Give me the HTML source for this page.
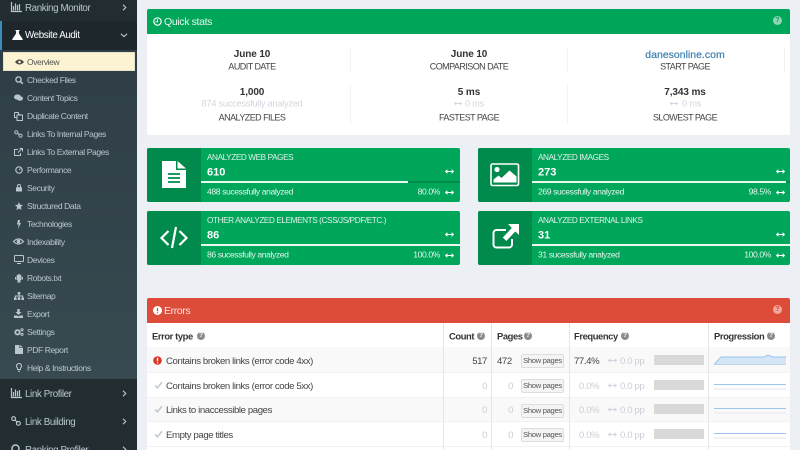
<!DOCTYPE html>
<html><head><meta charset="utf-8">
<style>
html,body{margin:0;padding:0;width:800px;height:450px;overflow:hidden}
body{background:#ecf0f5;font-family:"Liberation Sans",sans-serif;color:#333}
#p{position:relative;width:800px;height:450px;overflow:hidden;background:#ecf0f5}
.a{position:absolute}
.t{position:absolute;white-space:nowrap;line-height:1;transform:translateY(-50%)}
.c{position:absolute;white-space:nowrap;line-height:1;transform:translate(-50%,-50%);text-align:center}
.r{position:absolute;white-space:nowrap;line-height:1;transform:translate(-100%,-50%)}
.s{font-size:8.5px;letter-spacing:-.4px;color:#b8c7ce;left:27px}
.m{font-size:9.8px;letter-spacing:-.4px;color:#b8c7ce;left:25px;margin-top:2px}
.big{font-size:10px;font-weight:bold;letter-spacing:-.1px;color:#333;margin-top:2px}
.up{font-size:9px;letter-spacing:-.55px;color:#444;margin-top:1px}
.lt{font-size:9.3px;letter-spacing:-.28px;color:#d2d6de;margin-top:1px}
.w1{font-size:8.2px;letter-spacing:-.4px;color:#dff3ea;left:60px;margin-top:1px}
.w2{font-size:11px;font-weight:bold;color:#fff;left:60px;margin-top:2px}
.w3{font-size:8.6px;letter-spacing:-.4px;color:#e4f6ed;left:60px}
.box{position:absolute;height:54px;background:#00a65a;border-radius:2px;overflow:hidden}
.ic{position:absolute;left:0;top:0;width:54px;height:54px;background:#008a4b}
.th{font-size:9.4px;font-weight:bold;letter-spacing:-.4px;color:#333}
.td{font-size:9.6px;letter-spacing:-.4px;color:#444;margin-top:1.5px}
.g{color:#c9ced6}
.btn{position:absolute;left:521px;width:41px;height:12px;border:1px solid #ddd;background:#f4f4f4;border-radius:2px;font-size:7.6px;letter-spacing:-.3px;line-height:12px;text-align:center;color:#555}
.bar{position:absolute;left:654px;width:50px;height:10px;background:#d9d9d9}
.vl{position:absolute;width:1px;top:323px;height:127px;background:#e6e6e6}
svg{position:absolute;overflow:visible}
.q{position:absolute;width:8px;height:8px;border-radius:50%;background:#8a8a8a;color:#fff;font-size:7px;font-weight:bold;line-height:8px;text-align:center}
</style></head>
<body><div id="p">
<svg width="0" height="0" style="position:absolute"><defs>
<symbol id="ar" viewBox="0 0 9 5"><path d="M.5 2.500h8M2.500.700L.6 2.500l1.900 1.800M6.500.700l1.900 1.800-1.900 1.800" fill="none" stroke="currentColor" stroke-width="1"/></symbol>
<symbol id="ck" viewBox="0 0 9 8"><path d="M1 4.500l2.500 2.300L8 1.200" fill="none" stroke="currentColor" stroke-width="1.700"/></symbol>
</defs></svg>

<!-- SIDEBAR -->
<div class="a" style="left:0;top:0;width:137px;height:450px;background:#222d32"></div>
<div class="a" style="left:0;top:21px;width:137px;height:29px;background:#1e282c"></div>
<div class="a" style="left:0;top:21px;width:2px;height:29px;background:#3c8dbc"></div>
<div class="a" style="left:0;top:50px;width:137px;height:329px;background:linear-gradient(#2f3e46,#384950)"></div>
<div class="a" style="left:3px;top:52px;width:130px;height:17px;background:#fcf3d3;border:1px solid #e8e2c8"></div>

<svg style="left:11px;top:2px" width="11" height="10" viewBox="0 0 11 10"><path d="M.5 0v9.500H11M2.500 4v4.500M4.500 1.500v7M6.500 3v5.500M8.500 2v6.500" fill="none" stroke="#b8c7ce" stroke-width="1.200"/></svg>
<div class="t m" style="top:7px">Ranking Monitor</div>
<svg style="left:122px;top:4px" width="5" height="7"><path d="M1 .8l2.800 2.700L1 6.200" fill="none" stroke="#b8c7ce" stroke-width="1.100"/></svg>

<svg style="left:12px;top:30px" width="11" height="10" viewBox="0 0 11 10"><path d="M3.500 0h4v1h-.6v2.500L10.800 9.200Q11 10 10 10H1Q0 10 .2 9.200L4.100 3.500V1h-.6z" fill="#fff"/></svg>
<div class="t m" style="top:35px;color:#fff;margin-top:1px">Website Audit</div>
<svg style="left:120px;top:33px" width="8" height="5"><path d="M1 .8l3 2.800 3-2.800" fill="none" stroke="#b8c7ce" stroke-width="1.100"/></svg>

<svg style="left:15px;top:59px" width="9" height="6" viewBox="0 0 9 6"><path d="M0 3Q4.500-2 9 3 4.500 8 0 3z" fill="#444"/><circle cx="4.500" cy="3" r="1.300" fill="#fcf3d3"/></svg>
<div class="t s" style="top:62px;color:#555">Overview</div>

<svg style="left:15px;top:76px" width="8" height="8" viewBox="0 0 8 8"><circle cx="3.500" cy="3.500" r="2.600" fill="none" stroke="#b8c7ce" stroke-width="1.400"/><path d="M5.300 5.300L7.800 7.800" stroke="#b8c7ce" stroke-width="1.500"/></svg>
<div class="t s" style="top:80px">Checked Files</div>
<svg style="left:14px;top:94px" width="9" height="8" viewBox="0 0 9 8"><ellipse cx="3.500" cy="3" rx="3.500" ry="2.600" fill="#b8c7ce"/><ellipse cx="6" cy="4.500" rx="3" ry="2.300" fill="#b8c7ce"/></svg>
<div class="t s" style="top:98px">Content Topics</div>
<svg style="left:14px;top:112px" width="9" height="9" viewBox="0 0 9 9"><path d="M.5.500h4v2h2M2.500 5.500H.5v-5M3 3h5.500v5.500H3z" fill="none" stroke="#b8c7ce"/></svg>
<div class="t s" style="top:116px">Duplicate Content</div>
<svg style="left:14px;top:130px" width="9" height="8" viewBox="0 0 9 8"><circle cx="2.300" cy="2.300" r="1.600" fill="none" stroke="#b8c7ce"/><circle cx="6.500" cy="5.700" r="1.600" fill="none" stroke="#b8c7ce"/><path d="M3.500 3.300l2 1.400" stroke="#b8c7ce"/></svg>
<div class="t s" style="top:134px">Links To Internal Pages</div>
<svg style="left:14px;top:148px" width="9" height="8" viewBox="0 0 9 8"><path d="M6.500 5v2.500H.5v-6H4M4 4.500L8 .800M5.500.500h3v3" fill="none" stroke="#b8c7ce"/></svg>
<div class="t s" style="top:152px">Links To External Pages</div>
<svg style="left:15px;top:166px" width="8" height="8" viewBox="0 0 8 8"><circle cx="4" cy="4" r="3.200" fill="none" stroke="#b8c7ce" stroke-width="1.200"/><path d="M4 4l1.500-1.500" stroke="#b8c7ce"/></svg>
<div class="t s" style="top:170px">Performance</div>
<svg style="left:16px;top:184px" width="6" height="8" viewBox="0 0 6 8"><path d="M1.500 3.500V2a1.500 1.500 0 013 0v1.500" fill="none" stroke="#b8c7ce"/><rect y="3.200" width="6" height="4.300" rx=".5" fill="#b8c7ce"/></svg>
<div class="t s" style="top:188px">Security</div>
<svg style="left:15px;top:202px" width="8" height="8" viewBox="0 0 8 8"><path d="M4 0l1.200 2.700L8 3 5.900 5l.6 3L4 6.500 1.500 8l.6-3L0 3l2.800-.3z" fill="#b8c7ce"/></svg>
<div class="t s" style="top:206px">Structured Data</div>
<svg style="left:17px;top:220px" width="4" height="9" viewBox="0 0 4 9"><path d="M1 0h2.200L2.400 3H4L1 9l.7-4.500H0z" fill="#b8c7ce"/></svg>
<div class="t s" style="top:224px">Technologies</div>
<svg style="left:13px;top:238px" width="11" height="7" viewBox="0 0 11 7"><path d="M.5 3.500Q5.500-1.500 10.500 3.500 5.500 8.500.5 3.500z" fill="none" stroke="#b8c7ce" stroke-width="1.200"/><circle cx="5.500" cy="3.500" r="1.800" fill="#b8c7ce"/></svg>
<div class="t s" style="top:242px">Indexability</div>
<svg style="left:14px;top:255px" width="10" height="9" viewBox="0 0 10 9"><rect x=".5" y=".5" width="9" height="6" rx=".6" fill="none" stroke="#b8c7ce"/><path d="M3 8.500h4" stroke="#b8c7ce"/></svg>
<div class="t s" style="top:260px">Devices</div>
<svg style="left:15px;top:274px" width="8" height="9" viewBox="0 0 8 9"><path d="M1.500 2.500a2.500 2.300 0 015 0v3.500h-1v2.500h-3V6h-1z" fill="#b8c7ce"/><path d="M.5 3v2.500M7.500 3v2.500" stroke="#b8c7ce"/></svg>
<div class="t s" style="top:278px">Robots.txt</div>
<svg style="left:14px;top:292px" width="10" height="8" viewBox="0 0 10 8"><path d="M3.700 0h2.600v2.500H3.700zM0 5.500h2.600V8H0zM3.700 5.500h2.600V8H3.700zM7.400 5.500H10V8H7.400z" fill="#b8c7ce"/><path d="M1.300 5.500V4h7.400v1.500M5 2.500v3" fill="none" stroke="#b8c7ce"/></svg>
<div class="t s" style="top:296px">Sitemap</div>
<svg style="left:14px;top:309px" width="9" height="9" viewBox="0 0 9 9"><path d="M3.300 0h2.400v3H7.500L4.500 6 1.500 3h1.800zM0 6.500h3L4.500 7.500 6 6.500h3V9H0z" fill="#b8c7ce"/></svg>
<div class="t s" style="top:314px">Export</div>
<svg style="left:14px;top:328px" width="10" height="8" viewBox="0 0 10 8"><circle cx="3.500" cy="4.300" r="2.200" fill="none" stroke="#b8c7ce" stroke-width="1.800"/><circle cx="8" cy="1.800" r="1.100" fill="none" stroke="#b8c7ce"/><circle cx="8" cy="6.300" r="1.100" fill="none" stroke="#b8c7ce"/></svg>
<div class="t s" style="top:332px">Settings</div>
<svg style="left:15px;top:345px" width="8" height="9" viewBox="0 0 8 9"><path d="M0 0h4.500v3H8v6H0zM5.200 0L8 2.400H5.200z" fill="#b8c7ce"/></svg>
<div class="t s" style="top:350px">PDF Report</div>
<svg style="left:16px;top:363px" width="6" height="9" viewBox="0 0 6 9"><path d="M3 .5a2.500 2.500 0 011.500 4.500V6.500h-3V5A2.500 2.500 0 013 .5zM2 8.300h2" fill="none" stroke="#b8c7ce"/></svg>
<div class="t s" style="top:368px">Help &amp; Instructions</div>

<svg style="left:11px;top:388px" width="11" height="10" viewBox="0 0 11 10"><path d="M.5 0v9.500H11M2.500 4v4.500M4.500 1.500v7M6.500 3v5.500M8.500 2v6.500" fill="none" stroke="#b8c7ce" stroke-width="1.200"/></svg>
<div class="t m" style="top:393px">Link Profiler</div>
<svg style="left:122px;top:390px" width="5" height="7"><path d="M1 .8l2.800 2.700L1 6.200" fill="none" stroke="#b8c7ce" stroke-width="1.100"/></svg>
<svg style="left:11px;top:416px" width="10" height="10" viewBox="0 0 10 10"><circle cx="2.600" cy="2.600" r="1.900" fill="none" stroke="#b8c7ce" stroke-width="1.200"/><circle cx="7.400" cy="7.400" r="1.900" fill="none" stroke="#b8c7ce" stroke-width="1.200"/><path d="M4 4l2 2" stroke="#b8c7ce" stroke-width="1.200"/></svg>
<div class="t m" style="top:421px">Link Building</div>
<svg style="left:122px;top:418px" width="5" height="7"><path d="M1 .8l2.800 2.700L1 6.200" fill="none" stroke="#b8c7ce" stroke-width="1.100"/></svg>
<svg style="left:11px;top:444px" width="10" height="10" viewBox="0 0 10 10"><circle cx="4.500" cy="4.500" r="3.500" fill="none" stroke="#b8c7ce" stroke-width="1.500"/><path d="M7 7l2.800 2.800" stroke="#b8c7ce" stroke-width="1.500"/></svg>
<div class="t m" style="top:449px">Ranking Profiler</div>
<svg style="left:122px;top:446px" width="5" height="7"><path d="M1 .8l2.800 2.700L1 6.200" fill="none" stroke="#b8c7ce" stroke-width="1.100"/></svg>

<!-- QUICK STATS -->
<div class="a" style="left:147px;top:9px;width:643px;height:126px;background:#fff;border-radius:2px"></div>
<div class="a" style="left:147px;top:9px;width:643px;height:25px;background:#00a65a;border-radius:2px 2px 0 0"></div>
<svg style="left:153px;top:17px" width="9" height="9" viewBox="0 0 9 9"><circle cx="4.500" cy="4.500" r="3.700" fill="none" stroke="#fff" stroke-width="1.200"/><path d="M4.500 2.200v2.500H2.700" fill="none" stroke="#fff"/></svg>
<div class="t" style="left:164px;top:21.500px;font-size:10.500px;letter-spacing:-.35px;color:#e8f8f0">Quick stats</div>
<div class="q" style="left:773px;top:16px;width:9px;height:9px;line-height:9px;background:#8fd6b5;color:#00a65a">?</div>

<div class="a" style="left:350px;top:47px;width:1px;height:26px;background:#f2f2f2"></div>
<div class="a" style="left:567px;top:47px;width:1px;height:26px;background:#f2f2f2"></div>
<div class="a" style="left:784px;top:47px;width:1px;height:26px;background:#f2f2f2"></div>
<div class="a" style="left:350px;top:85px;width:1px;height:39px;background:#f2f2f2"></div>
<div class="a" style="left:567px;top:85px;width:1px;height:39px;background:#f2f2f2"></div>

<div class="c big" style="left:252px;top:53px">June 10</div>
<div class="c up" style="left:252px;top:66px">AUDIT DATE</div>
<div class="c big" style="left:469px;top:53px">June 10</div>
<div class="c up" style="left:469px;top:66px">COMPARISON DATE</div>
<div class="c big" style="left:685px;top:53px;font-weight:normal;color:#3c7fb0;font-size:10.500px;letter-spacing:0;-webkit-text-stroke:.2px #3c7fb0">danesonline.com</div>
<div class="c up" style="left:685px;top:66px">START PAGE</div>

<div class="c big" style="left:252px;top:91px">1,000</div>
<div class="c lt" style="left:252px;top:103px">874 successfully analyzed</div>
<div class="c up" style="left:252px;top:117px">ANALYZED FILES</div>
<div class="c big" style="left:469px;top:91px">5 ms</div>
<svg style="left:454px;top:101px;color:#d2d6de" width="8" height="5"><use href="#ar"/></svg>
<div class="t lt" style="left:465px;top:103px">0 ms</div>
<div class="c up" style="left:469px;top:117px">FASTEST PAGE</div>
<div class="c big" style="left:685px;top:91px">7,343 ms</div>
<svg style="left:670px;top:101px;color:#d2d6de" width="8" height="5"><use href="#ar"/></svg>
<div class="t lt" style="left:682px;top:103px">0 ms</div>
<div class="c up" style="left:685px;top:117px">SLOWEST PAGE</div>

<!-- INFO BOXES -->
<div class="box" style="left:147px;top:148px;width:313px">
 <div class="ic"></div>
 <svg style="left:15px;top:13px" width="24" height="27" viewBox="0 0 24 27"><path d="M0 0h14v9h10v18H0zM15.500 0L24 7.500h-8.500z" fill="#fff"/><path d="M6 13h12M6 17h12M6 21h12" stroke="#008a4b" stroke-width="1.800"/></svg>
 <div class="t w1" style="top:9px">ANALYZED WEB PAGES</div>
 <div class="t w2" style="top:23px">610</div>
 <div class="a" style="left:54px;top:33px;width:259px;height:2px;background:#008a4b"></div>
 <div class="a" style="left:54px;top:33px;width:207px;height:2px;background:#e8f8f0"></div>
 <div class="t w3" style="top:44px">488 sucessfully analyzed</div>
 <div class="r w3" style="left:293px;top:44px">80.0%</div>
 <svg style="left:298px;top:20.500px;color:#fff" width="9" height="5"><use href="#ar"/></svg>
 <svg style="left:298px;top:41.500px;color:#fff" width="9" height="5"><use href="#ar"/></svg>
</div>
<div class="box" style="left:147px;top:211px;width:313px">
 <div class="ic"></div>
 <svg style="left:13px;top:13px" width="28" height="27" viewBox="0 0 28 27"><path d="M8.500 7L1.500 14l7 7M19.500 7l7 7-7 7M16 3L12 24" fill="none" stroke="#fff" stroke-width="2.200"/></svg>
 <div class="t w1" style="top:9px">OTHER ANALYZED ELEMENTS (CSS/JS/PDF/ETC.)</div>
 <div class="t w2" style="top:23px">86</div>
 <div class="a" style="left:54px;top:33px;width:259px;height:2px;background:#e8f8f0"></div>
 <div class="t w3" style="top:44px">86 sucessfully analyzed</div>
 <div class="r w3" style="left:293px;top:44px">100.0%</div>
 <svg style="left:298px;top:20.500px;color:#fff" width="9" height="5"><use href="#ar"/></svg>
 <svg style="left:298px;top:41.500px;color:#fff" width="9" height="5"><use href="#ar"/></svg>
</div>
<div class="box" style="left:478px;top:148px;width:312px">
 <div class="ic"></div>
 <svg style="left:12px;top:15px" width="30" height="24" viewBox="0 0 30 24"><rect x="1" y="1" width="27.500" height="21.500" rx="1.500" fill="none" stroke="#fff" stroke-width="1.600"/><circle cx="7" cy="6.500" r="2.600" fill="#fff"/><path d="M3.500 19.500v-3l5-4 3 2.500 8-7.500 7 6v6z" fill="#fff"/></svg>
 <div class="t w1" style="top:9px">ANALYZED IMAGES</div>
 <div class="t w2" style="top:23px">273</div>
 <div class="a" style="left:54px;top:33px;width:258px;height:2px;background:#008a4b"></div>
 <div class="a" style="left:54px;top:33px;width:254px;height:2px;background:#e8f8f0"></div>
 <div class="t w3" style="top:44px">269 sucessfully analyzed</div>
 <div class="r w3" style="left:293px;top:44px">98.5%</div>
 <svg style="left:298px;top:20.500px;color:#fff" width="9" height="5"><use href="#ar"/></svg>
 <svg style="left:298px;top:41.500px;color:#fff" width="9" height="5"><use href="#ar"/></svg>
</div>
<div class="box" style="left:478px;top:211px;width:312px">
 <div class="ic"></div>
 <svg style="left:14px;top:13px" width="27" height="25" viewBox="0 0 27 25"><path d="M20 15v5.500a3 3 0 01-3 3H4.500a3 3 0 01-3-3V9a3 3 0 013-3H14" fill="none" stroke="#fff" stroke-width="2"/><path d="M27 0v11l-3.700-3.500-9 9.500-3.500-3.500 9-9.500L16 0z" fill="#fff"/></svg>
 <div class="t w1" style="top:9px">ANALYZED EXTERNAL LINKS</div>
 <div class="t w2" style="top:23px">31</div>
 <div class="a" style="left:54px;top:33px;width:258px;height:2px;background:#e8f8f0"></div>
 <div class="t w3" style="top:44px">31 sucessfully analyzed</div>
 <div class="r w3" style="left:293px;top:44px">100.0%</div>
 <svg style="left:298px;top:20.500px;color:#fff" width="9" height="5"><use href="#ar"/></svg>
 <svg style="left:298px;top:41.500px;color:#fff" width="9" height="5"><use href="#ar"/></svg>
</div>

<!-- ERRORS -->
<div class="a" style="left:147px;top:298px;width:643px;height:152px;background:#fff"></div>
<div class="a" style="left:147px;top:298px;width:643px;height:25px;background:#dd4b39;border-radius:2px 2px 0 0"></div>
<svg style="left:153px;top:306px" width="9" height="9" viewBox="0 0 9 9"><circle cx="4.500" cy="4.500" r="4.500" fill="#fff"/><path d="M4.500 1.800v3.400M4.500 6.200v1.200" stroke="#dd4b39" stroke-width="1.300"/></svg>
<div class="t" style="left:164px;top:310.500px;font-size:10.500px;letter-spacing:-.4px;color:#fbe4e0">Errors</div>
<div class="q" style="left:773px;top:305px;width:9px;height:9px;line-height:9px;background:#f0a79c;color:#dd4b39">?</div>

<div class="a" style="left:147px;top:347px;width:643px;height:25px;background:#f9f9f9"></div>
<div class="a" style="left:147px;top:397px;width:643px;height:24px;background:#f9f9f9"></div>
<div class="a" style="left:147px;top:372px;width:643px;height:1px;background:#f2f2f2"></div>
<div class="a" style="left:147px;top:397px;width:643px;height:1px;background:#f2f2f2"></div>
<div class="a" style="left:147px;top:421px;width:643px;height:1px;background:#f2f2f2"></div>
<div class="a" style="left:147px;top:446px;width:643px;height:1px;background:#f2f2f2"></div>
<div class="vl" style="left:443px"></div>
<div class="vl" style="left:491px"></div>
<div class="vl" style="left:569px"></div>
<div class="vl" style="left:708px"></div>

<div class="t th" style="left:152px;top:336px">Error type</div><div class="q" style="left:197px;top:332px">?</div>
<div class="t th" style="left:449px;top:336px">Count</div><div class="q" style="left:477px;top:332px">?</div>
<div class="t th" style="left:497px;top:336px">Pages</div><div class="q" style="left:524px;top:332px">?</div>
<div class="t th" style="left:574px;top:336px">Frequency</div><div class="q" style="left:621px;top:332px">?</div>
<div class="t th" style="left:714px;top:336px">Progression</div><div class="q" style="left:767px;top:332px">?</div>

<svg style="left:153px;top:356px" width="9" height="9" viewBox="0 0 9 9"><circle cx="4.500" cy="4.500" r="4.300" fill="#d73925"/><path d="M4.500 1.800v3.400M4.500 6.200v1.200" stroke="#fff" stroke-width="1.300"/></svg>
<div class="t td" style="left:166px;top:360px">Contains broken links (error code 4xx)</div>
<div class="r td" style="left:487px;top:360px">517</div>
<div class="t td" style="left:497px;top:360px">472</div>
<div class="btn" style="top:354px">Show pages</div>
<div class="t td" style="left:574px;top:360px">77.4%</div>
<svg style="left:608px;top:358px;color:#d2d6de" width="9" height="5"><use href="#ar"/></svg>
<div class="t td g" style="left:620px;top:360px">0.0 pp</div>
<div class="bar" style="top:355px"></div>
<svg style="left:714px;top:353px" width="72" height="13" viewBox="0 0 72 13"><path d="M0 11.500L7 4h43l4-2 5 2h13v7.500z" fill="#d3e5f6"/><path d="M0 11.500L7 4h43l4-2 5 2h13" fill="none" stroke="#9cc6ec"/><path d="M0 11.500h72" stroke="#c3d4e4"/></svg>

<svg style="left:154px;top:381px;color:#c8ccd2" width="9" height="8"><use href="#ck"/></svg>
<div class="t td" style="left:166px;top:385px">Contains broken links (error code 5xx)</div>
<div class="r td g" style="left:487px;top:385px">0</div>
<div class="r td g" style="left:513px;top:385px">0</div>
<div class="btn" style="top:379px">Show pages</div>
<div class="t td g" style="left:579px;top:385px">0.0%</div>
<svg style="left:608px;top:383px;color:#d2d6de" width="9" height="5"><use href="#ar"/></svg>
<div class="t td g" style="left:620px;top:385px">0.0 pp</div>
<div class="bar" style="top:380px"></div>
<svg style="left:714px;top:383px" width="72" height="7"><path d="M0 1.500h72" stroke="#9cc6ec"/><path d="M0 6h72" stroke="#e3e6e9"/></svg>

<svg style="left:154px;top:405px;color:#c8ccd2" width="9" height="8"><use href="#ck"/></svg>
<div class="t td" style="left:166px;top:409px">Links to inaccessible pages</div>
<div class="r td g" style="left:487px;top:409px">0</div>
<div class="r td g" style="left:513px;top:409px">0</div>
<div class="btn" style="top:404px">Show pages</div>
<div class="t td g" style="left:579px;top:409px">0.0%</div>
<svg style="left:608px;top:407px;color:#d2d6de" width="9" height="5"><use href="#ar"/></svg>
<div class="t td g" style="left:620px;top:409px">0.0 pp</div>
<div class="bar" style="top:404px"></div>
<svg style="left:714px;top:407px" width="72" height="7"><path d="M0 1.500h72" stroke="#9cc6ec"/><path d="M0 6h72" stroke="#e3e6e9"/></svg>

<svg style="left:154px;top:430px;color:#c8ccd2" width="9" height="8"><use href="#ck"/></svg>
<div class="t td" style="left:166px;top:434px">Empty page titles</div>
<div class="r td g" style="left:487px;top:434px">0</div>
<div class="r td g" style="left:513px;top:434px">0</div>
<div class="btn" style="top:428px">Show pages</div>
<div class="t td g" style="left:579px;top:434px">0.0%</div>
<svg style="left:608px;top:432px;color:#d2d6de" width="9" height="5"><use href="#ar"/></svg>
<div class="t td g" style="left:620px;top:434px">0.0 pp</div>
<div class="bar" style="top:429px"></div>
<svg style="left:714px;top:432px" width="72" height="7"><path d="M0 1.500h72" stroke="#9cc6ec"/><path d="M0 6h72" stroke="#e3e6e9"/></svg>
</div></body></html>
